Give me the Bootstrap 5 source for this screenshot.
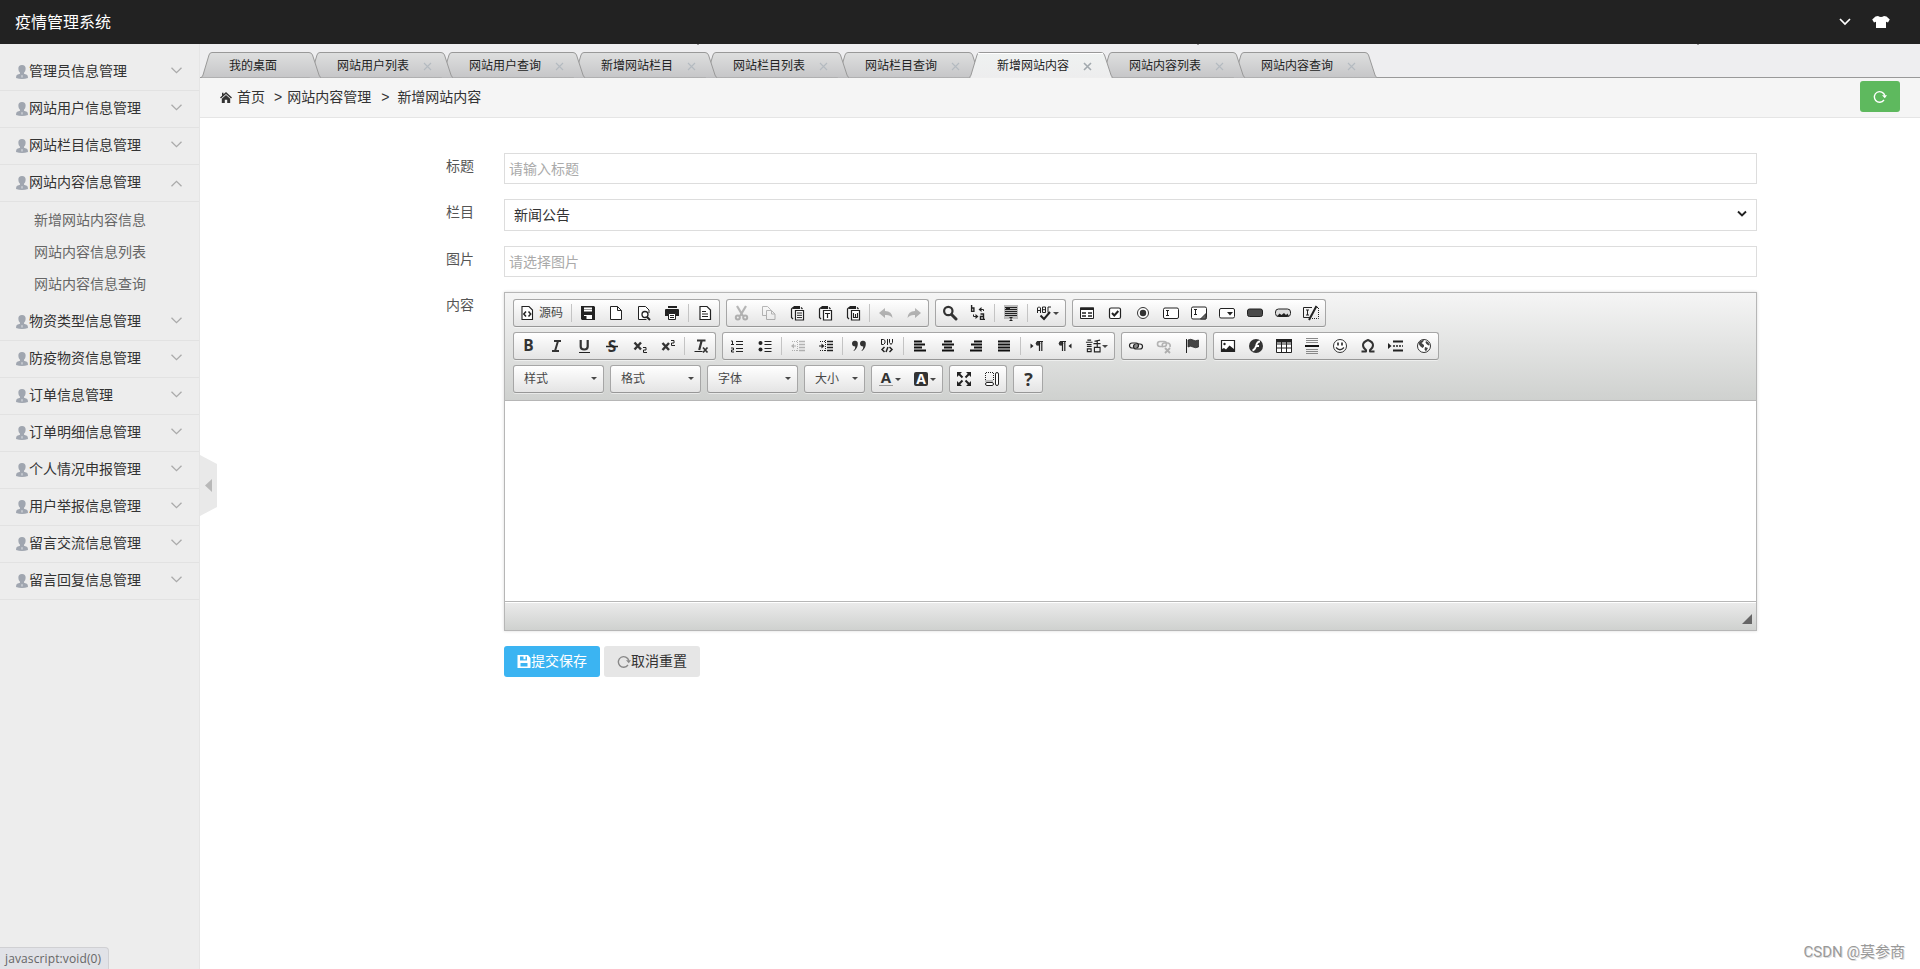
<!DOCTYPE html>
<html lang="zh-CN">
<head>
<meta charset="utf-8">
<title>疫情管理系统</title>
<link rel="stylesheet" href="https://cdn.jsdelivr.net/npm/bootstrap@5.3.0/dist/css/bootstrap.min.css">
<style>
body{font-family:"Liberation Sans","Noto Sans CJK SC",sans-serif;font-size:14px;line-height:20px;color:#333;background:#fff}
.topbar{height:44px;background:#222;color:#fff;font-size:16px;padding:0 30px 0 15px;gap:21px}
.topbar .me-auto{padding-top:1px}
.side{width:200px;background:#ededed;border-right:1px solid #e5e5e5;padding-top:10px}
.side-head{height:37px;border-bottom:1px solid #e2e2e2;padding:0 17px 0 16px}
.side-head>span{padding-bottom:2px}
.side-head .chev{margin-top:-3px}
.side-head.open .chev{transform:rotate(180deg);margin-top:0}
.side-sub{padding:2px 0 4px}
.side-sub a{display:block;height:32px;line-height:32px;padding-left:34px;color:#666;text-decoration:none}
.tabstrip{height:34px;background:#eeeef0 radial-gradient(circle at 1px 0,#999 1px,transparent 1.5px) -3px 0/500px 40px;border-bottom:1px solid #999;padding:8px 0 0 1px}
.tab-item{width:144px;height:26px;margin-right:-12px;padding-left:28px;font-size:12px;line-height:26px;color:#222}
.tab-item.home{width:120px}
.tab-item>svg.shape{left:0;top:0}
.tab-item>span{position:relative;padding-top:1px}
.tab-item .cls{position:relative;margin-left:14px;top:1px}
.crumbs{height:40px;background:#f5f5f5;border-bottom:1px solid #e5e5e5;padding:0 20px}
.crumbs>span{padding-bottom:1px}
.btn-green{width:40px;height:31px;background:#5eb95e;border-radius:3px;margin-top:-3px}
.form-area{padding:35px 163px 0 0}
.f-row{margin-bottom:15px}
.f-label{width:304px;padding-right:30px;color:#555;text-align:right;line-height:20px;padding-top:3px}
.form-control.f-in,.form-select.f-in{height:31px;border:1px solid #ddd;border-radius:0;font-size:14px;padding:0 4px;line-height:29px;color:#333}
.form-control.f-in::placeholder{color:#aaa}
.form-select.f-in{height:32px;padding-left:9px;background-size:0}
.sel-arrow{right:10px;top:11px}
.editor{border:1px solid #b6b6b6;box-shadow:0 0 3px rgba(0,0,0,.15)}
.ed-top{height:108px;padding:6px 8px 0;border-bottom:1px solid #b6b6b6;background:linear-gradient(#f5f5f5,#cfd1cf)}
.ed-row{gap:6px;margin-bottom:5px}
.ed-group{height:28px;border:1px solid #a6a6a6;border-bottom-color:#979797;border-radius:3px;background:linear-gradient(#fff,#e4e4e4);box-shadow:0 1px 0 rgba(255,255,255,.5)}
.ed-btn{width:28px;height:26px}
.ed-btn.dd{width:35px;padding-left:6px}
.ed-btn.src{width:55px;padding-left:5px;gap:4px;font-size:12px;color:#484848}
.ed-btn.off{opacity:.3}
.ed-sep{width:1px;height:18px;margin:4px 2px;background:#c4c4c4}
.caret{border:3px solid transparent;border-top-color:#474747;border-bottom:0;width:0;height:0}
.ed-combo{width:91px;padding:0 6px 1px 10px;font-size:12px;color:#474747}
.ed-combo.sm{width:61px}
.ed-area{height:200px}
.ed-foot{height:29px;border-top:1px solid #b6b6b6;background:linear-gradient(#ebebeb,#cfd1cf);box-shadow:inset 0 1px 0 #fff;padding:0 4px 6px}
.grip{border:5px solid transparent;border-right-color:#666;border-bottom-color:#666}
.act{height:31px;width:96px;border-radius:3px;font-size:14px;padding:0}
.act.save{background:#3bb4f2;color:#fff}
.act.reset{background:#e6e6e6;color:#333}
.handle{left:200px;top:455px}
.status{left:0;bottom:0;width:109px;height:22px;border:1px solid #d0d0d3;border-left:0;border-bottom:0;border-radius:0 4px 0 0;background:#e1e2e7;color:#666;font:12px/22px "Open Sans",sans-serif;letter-spacing:.12px;padding-left:5px;white-space:nowrap}
.wm{right:15px;bottom:6px;font:15px/22px Roboto,"Noto Sans CJK SC",sans-serif;color:#999;text-shadow:-1px -1px 0 #fff,1px 1px 0 #ddd}
svg{flex:none;display:block}
</style>
</head>
<body class="vh-100 overflow-hidden d-flex flex-column">

<svg width="0" height="0" class="position-absolute"><defs>
<symbol id="user" viewBox="0 0 12 14"><path fill="#a0a6b0" d="M6 0C3.200 0 2.200 1.500 2.400 4c.1 1.600.7 3 1.600 3.800V8.800L1.200 9.800Q0 10.400 0 13q6 2 12 0 0-2.600-1.200-3.200L8 8.800V7.800C8.900 7 9.500 5.600 9.600 4 9.800 1.500 8.800 0 6 0"/><path fill="#d5d8dc" d="M6 10l.8.8-.5 2h-.6l-.5-2z"/></symbol>
<symbol id="chev" viewBox="0 0 11 7"><path d="M.5.7l5 5 5-5" fill="none" stroke="currentColor" stroke-width="1.300"/></symbol>
<symbol id="shirt" viewBox="0 0 18 14"><path fill="#fff" d="M6 1q3 2 6 0l2.500.6L17.800 4.500 16 7.500l-2-.8V13H4V6.700l-2 .8L.2 4.500 3.500 1.600z"/></symbol>
<symbol id="home" viewBox="0 0 12 11"><path fill="#333" d="M6 0l6 5.600-1 .9L6 2 1 6.500l-1-.9L2 3.700 2 .8h1.500v1.500z"/><path fill="#333" d="M6 3l4.200 3.800V11H7.200V7.700H4.800V11h-3V6.800z"/></symbol>
<symbol id="spin" viewBox="0 0 14 13"><path d="M11 10A5.300 5.300 0 1 1 11.800 5.500" fill="none" stroke="currentColor" stroke-width="1.400"/><path fill="currentColor" d="M9 5.200h5L11.800 8.200z"/></symbol>
<symbol id="disk" viewBox="0 0 14 13"><path fill="#fff" fill-rule="evenodd" d="M.5 0H11l2.500 3v10H.5zM3 1.500v4h7v-4H8.500v2.700H6.500V1.500zM3.500 8v3.500h7V8z"/></symbol>
<symbol id="source" viewBox="0 0 16 16"><path d="M3 1.500h7l3.500 3.500v9.500H3z" fill="#fff" stroke="#222" stroke-width="1.100"/><path d="M7 6.500L4.800 9 7 11.500M9.500 6.500L11.700 9l-2.200 2.500" fill="none" stroke="#222" stroke-width="1.500"/></symbol>
<symbol id="save" viewBox="0 0 16 16"><path fill="#222" d="M1 1h13l1 1v13H2l-1-1z"/><path fill="#fff" d="M4 2.500h8v4H4zM4 10h8v4H6.500v-3H4z"/><path d="M4 4.500h8" stroke="#999"/></symbol>
<symbol id="newp" viewBox="0 0 16 16"><path d="M2.500 1.500h7l4 4v9h-11zM9.500 1.500v4h4" fill="#fff" stroke="#222"/></symbol>
<symbol id="preview" viewBox="0 0 16 16"><path d="M2.500 1.500h7l3.500 3.500v3M2.500 1.500v13h8" fill="#fff" stroke="#222"/><circle cx="9" cy="9.500" r="3" fill="#fff" stroke="#222" stroke-width="1.300"/><path d="M11 12l3 3" stroke="#222" stroke-width="2"/></symbol>
<symbol id="print" viewBox="0 0 16 16"><path fill="#222" d="M4 1h9v2H4zM1 5q0-1 1-1h12q1 0 1 1v6H1z"/><path d="M4.500 8.500h7v6h-7z" fill="#fff" stroke="#222"/><path d="M6 10.500h4M6 12.500h4" stroke="#222"/></symbol>
<symbol id="templ" viewBox="0 0 16 16"><path d="M3 1.500h7l3.500 3.500v9.500H3z" fill="#fff" stroke="#222" stroke-width="1.200"/><path d="M5 6.500h4M5 9h6M5 11.500h6" stroke="#222" stroke-width="1.200"/></symbol>
<symbol id="cut" viewBox="0 0 16 16"><path d="M4 1l6 10M13 1L7 11" stroke="#222" stroke-width="2.200"/><circle cx="4.800" cy="12.500" r="2" fill="none" stroke="#222" stroke-width="2"/><circle cx="12.200" cy="12.500" r="2" fill="none" stroke="#222" stroke-width="2"/></symbol>
<symbol id="copy" viewBox="0 0 16 16"><path d="M5.500 10.500h-4v-9h5l3 3v1M5.500 5.500h5l3.500 3.500v5.500H5.500zM10.500 5.500V9H14" fill="none" stroke="#222"/></symbol>
<symbol id="clip" viewBox="0 0 16 16"><path d="M4 2.500L2.500 4v8.500L4 14M12 2.500l1.500 1.500" fill="none" stroke="#222" stroke-width="1.200"/><path fill="#222" d="M5 1h6v3H4V2z"/><path d="M6.500 5.500h8v9.500h-8z" fill="#fff" stroke="#222" stroke-width="1.200"/></symbol>
<symbol id="paste" viewBox="0 0 16 16"><use href="#clip"/><path d="M8 8h5M8 10.300h5M8 12.600h5" stroke="#222"/></symbol>
<symbol id="pastet" viewBox="0 0 16 16"><use href="#clip"/><path d="M8 8.500h5M10.500 8.500V13" stroke="#222" stroke-width="1.200"/></symbol>
<symbol id="pastew" viewBox="0 0 16 16"><use href="#clip"/><path d="M8.500 8v4.500h4V8M10.500 9v3.500" fill="none" stroke="#222" stroke-width="1.100"/></symbol>
<symbol id="undo" viewBox="0 0 16 16"><path fill="#222" d="M7 3v3q7 0 7.500 7-2.500-3.500-7.500-3v3L1 8z"/></symbol>
<symbol id="redo" viewBox="0 0 16 16"><path fill="#222" d="M9 3v3q-7 0-7.500 7Q4 9.500 9 10v3l6-5z"/></symbol>
<symbol id="find" viewBox="0 0 16 16"><circle cx="6.300" cy="6" r="4.200" fill="none" stroke="#333" stroke-width="2.200"/><path d="M9.800 9.700L14 14" stroke="#333" stroke-width="3" stroke-linecap="round"/></symbol>
<symbol id="replace" viewBox="0 0 16 16"><path d="M1.600 0v7M1.600 3h2.300v3.400H1.600M10.500 9h3v5.500M13.500 11.500h-3v2.900h4.500" fill="none" stroke="#222" stroke-width="1.400"/><path d="M13.500 6V4.500H11M3.500 9.500v2H6" fill="none" stroke="#222"/><path fill="#222" d="M11.500 2v5l-3-2.500zM5.500 9v5l3-2.500z"/></symbol>
<symbol id="selall" viewBox="0 0 16 16"><path fill="#bbb" d="M1 0h14v14H1z"/><path d="M2 2.500h12M2 4.500h12M2 6.500h12M2 8.500h12M2 10.500h12" stroke="#222"/><path fill="#222" d="M3 2h4v3H3z"/><path d="M8 12v4M6.500 12.500h3M6.500 15.500h3" stroke="#222"/></symbol>
<symbol id="spell" viewBox="0 0 16 16"><path d="M1.500 8V3l1-1h1l1 1v5M1.500 5.500h3M6.500 2v5.500h3V2h-3M6.500 4.700h3M15 2h-3v5.500h2" fill="none" stroke="#222"/><path d="M4.500 10.500l3.500 3.500L14 7" fill="none" stroke="#222" stroke-width="2"/></symbol>
<symbol id="form" viewBox="0 0 16 16"><path d="M1.500 3h13v10.500h-13z" fill="#fff" stroke="#222"/><path fill="#222" d="M1 2.500h14V5H1z"/><path d="M3 8h4M3 11h4M9 8h4M9 11h4" stroke="#222" stroke-width="1.600"/></symbol>
<symbol id="check" viewBox="0 0 16 16"><rect x="2.500" y="3" width="11" height="10.500" rx="1.500" fill="#fff" stroke="#222" stroke-width="1.200"/><path d="M5 8l2.300 2.500 4-4.500" fill="none" stroke="#222" stroke-width="2"/></symbol>
<symbol id="radio" viewBox="0 0 16 16"><circle cx="8" cy="8" r="5.500" fill="#fff" stroke="#333"/><circle cx="8" cy="8" r="3.200" fill="#333"/></symbol>
<symbol id="tfield" viewBox="0 0 16 16"><rect x=".5" y="3" width="15" height="10.500" rx="1.500" fill="#fff" stroke="#222"/><path d="M3 5.500h3M3 10.500h3M4.500 5.500v5" stroke="#222"/></symbol>
<symbol id="tarea" viewBox="0 0 16 16"><rect x=".5" y="2" width="15" height="12" rx="1.500" fill="#fff" stroke="#222"/><path d="M3 4.500h3M3 9.500h3M4.500 4.500v5" stroke="#222"/><path d="M9.500 14L15 8.500V14z" fill="#666" stroke="#333"/></symbol>
<symbol id="select" viewBox="0 0 16 16"><rect x=".5" y="3.500" width="15" height="9.500" rx="1.500" fill="#fff" stroke="#222"/><path fill="#222" d="M8 7h6l-3 3.500z"/></symbol>
<symbol id="button" viewBox="0 0 16 16"><rect x=".5" y="4" width="15" height="7.500" rx="2" fill="#4a4a4a" stroke="#222"/></symbol>
<symbol id="imgbtn" viewBox="0 0 16 16"><rect x=".5" y="4" width="15" height="7.500" rx="3" fill="#ddd" stroke="#222"/><path fill="#222" d="M2 11.500l2.500-3 2 1.500L9 8l2 2 1.500-1.500 1.500 3z"/></symbol>
<symbol id="hidden" viewBox="0 0 16 16"><path d="M9 2.500H.5v10H7M3 5h3M3 10h3M4.500 5v5" fill="none" stroke="#222"/><path d="M12 2.500h3.500v11H9" fill="none" stroke="#222" stroke-dasharray="1 1"/><path d="M13.500 1L6 15" stroke="#222" stroke-width="2"/></symbol>
<symbol id="bold" viewBox="0 0 16 16"><text x="3.200" y="13.300" font-family="Open Sans" font-weight="700" font-size="15.500" fill="#333">B</text></symbol>
<symbol id="italic" viewBox="0 0 16 16"><path d="M6 3h7M4 13h7M10 3L7 13" stroke="#333" stroke-width="2" fill="none"/></symbol>
<symbol id="under" viewBox="0 0 16 16"><path d="M4.700 2v6.500q0 3 3.500 3t3.500-3V2" fill="none" stroke="#333" stroke-width="2.200"/><path d="M3 14.500h11" stroke="#222"/></symbol>
<symbol id="strike" viewBox="0 0 16 16"><text x="3.700" y="13.500" font-family="Open Sans" font-weight="700" font-size="15.500" fill="#333">S</text><path d="M2 8.500h12" stroke="#222" stroke-width="1.500"/></symbol>
<symbol id="sub" viewBox="0 0 16 16"><path d="M2.500 4.500l6.500 7M9 4.500l-6.500 7" stroke="#333" stroke-width="2.400"/><path d="M11 9.500h3v2.500h-2.500v2.500H15" fill="none" stroke="#222"/></symbol>
<symbol id="sup" viewBox="0 0 16 16"><path d="M2.500 5l6.500 7M9 5l-6.500 7" stroke="#333" stroke-width="2.400"/><path d="M11 2.500h3V5h-2.500v2.500H15" fill="none" stroke="#222"/></symbol>
<symbol id="rmfmt" viewBox="0 0 16 16"><path d="M4 2.500h8.500M8.700 2.500L6.200 12" stroke="#333" stroke-width="2.200"/><path d="M1.500 13.500h8" stroke="#222"/><path d="M10 9.500l4.500 5M14.500 9.500l-4.500 5" stroke="#333" stroke-width="1.700"/></symbol>
<symbol id="ol" viewBox="0 0 16 16"><path d="M2 3h1.500v3.500M2 6.500h3M2 10h2.500v2H2.500v2H5" fill="none" stroke="#222"/><path d="M7 3.500h7M7 6.500h7M7 10.500h7M7 13.500h7" stroke="#222" stroke-width="1.200"/></symbol>
<symbol id="ul" viewBox="0 0 16 16"><circle cx="3.500" cy="5" r="2" fill="#222"/><circle cx="3.500" cy="11.500" r="2" fill="#222"/><path d="M7.500 3.500h7M7.500 6.500h7M7.500 10.500h7M7.500 13.500h7" stroke="#222" stroke-width="1.200"/></symbol>
<symbol id="indent" viewBox="0 0 16 16"><path d="M7.500 2v12" stroke="#222" stroke-dasharray="1 1"/><path d="M9 3.500h6M9 6.500h6M9 9.500h6M9 12.500h6" stroke="#222" stroke-width="1.300"/><path d="M1 8h3" stroke="#222"/><path fill="#222" d="M3.500 5.500v5l3-2.500z"/><path d="M2 3.500h5M2 12.500h5" stroke="#222" stroke-dasharray="1 1"/></symbol>
<symbol id="outdent" viewBox="0 0 16 16"><path d="M7.500 2v12" stroke="#222" stroke-dasharray="1 1"/><path d="M9 3.500h6M9 6.500h6M9 9.500h6M9 12.500h6" stroke="#222" stroke-width="1.300"/><path d="M3 8h3" stroke="#222"/><path fill="#222" d="M4 5.500v5L1 8z"/><path d="M2 3.500h5M2 12.500h5" stroke="#222" stroke-dasharray="1 1"/></symbol>
<symbol id="quote" viewBox="0 0 16 16"><path fill="#333" d="M1 5.500A2.700 2.700 0 0 1 6.800 6Q6.800 10 3 13L2.500 12.500Q4.500 10.500 4.300 8.500 1 8.500 1 5.500M9 5.500a2.700 2.700 0 0 1 5.800.5q0 4-3.800 7l-.5-.5q2-2 1.800-4Q9 8.500 9 5.500"/></symbol>
<symbol id="div" viewBox="0 0 16 16"><path d="M2.500 1v5.500h2L6 5V2.500L4.500 1.500h-2M8.500 1v6M10.500 1v3.500L12 6.500l1.500-2V1" fill="none" stroke="#222"/><path d="M5.500 9L3 11.500 5.500 14M10.500 9L13 11.500 10.500 14M9 9l-2 5" fill="none" stroke="#222" stroke-width="1.500"/></symbol>
<symbol id="al" viewBox="0 0 16 16"><path d="M2 3.500h8M2 6.500h11M2 9.500h8M2 12.500h12" stroke="#111" stroke-width="1.800"/></symbol>
<symbol id="ac" viewBox="0 0 16 16"><path d="M4 3.500h8M2 6.500h12M4 9.500h8M2 12.500h12" stroke="#111" stroke-width="1.800"/></symbol>
<symbol id="ar" viewBox="0 0 16 16"><path d="M6 3.500h8M3 6.500h11M6 9.500h8M2 12.500h12" stroke="#111" stroke-width="1.800"/></symbol>
<symbol id="aj" viewBox="0 0 16 16"><path d="M2 3.500h12M2 6.500h12M2 9.500h12M2 12.500h12" stroke="#111" stroke-width="1.800"/></symbol>
<symbol id="pil" viewBox="0 0 16 16"><path d="M8 3.500h6" stroke="#222"/><circle cx="9" cy="5.500" r="2.300" fill="#333"/><path d="M10.500 3v10M12.800 3v10" stroke="#222" stroke-width="1.200"/></symbol>
<symbol id="ltr" viewBox="0 0 16 16"><use href="#pil"/><path fill="#222" d="M1.500 5.500v5l3-2.500z"/></symbol>
<symbol id="rtl" viewBox="0 0 16 16"><use href="#pil" x="-5"/><path fill="#222" d="M14.500 5.500v5l-3-2.500z"/></symbol>
<symbol id="lang" viewBox="0 0 17 16"><path d="M1 4h7M2.500 1.800h4M2 6.500h5M2 8.500h5M2.500 11h4v3h-4zM9 5.500h7.500M16 1.800L10 3M13 2.500V9M10 9.500h6v4.700h-6z" fill="none" stroke="#222" stroke-width="1.200"/></symbol>
<symbol id="link" viewBox="0 0 16 16"><rect x="1.500" y="5" width="9" height="5" rx="2.500" fill="none" stroke="#222" stroke-width="1.200"/><rect x="5.500" y="6" width="9" height="5" rx="2.500" fill="none" stroke="#222" stroke-width="1.200"/><path d="M5 8h6" stroke="#222"/></symbol>
<symbol id="unlink" viewBox="0 0 16 16"><rect x="1.500" y="3.500" width="9" height="5" rx="2.500" fill="none" stroke="#222" stroke-width="1.600"/><path d="M7 9q-2-3 1-4h4q3 1 2 4" fill="none" stroke="#222" stroke-width="1.600"/><path d="M9 10l5 5M14 10l-5 5" stroke="#222" stroke-width="1.800"/></symbol>
<symbol id="anchor" viewBox="0 0 16 16"><path d="M2.500 1v14" stroke="#222"/><path fill="#444" stroke="#222" stroke-width=".7" d="M4 2q3-1.500 5 0t5.500 0v7q-3 1.500-5.500 0T4 9z"/></symbol>
<symbol id="image" viewBox="0 0 16 16"><path d="M1.500 2.500h13v11h-13z" fill="#fff" stroke="#222" stroke-width="1.200"/><circle cx="4.500" cy="6" r="1.200" fill="#222"/><path fill="#222" d="M2 13v-2l2-1 2 1.500 3.500-4 4.500 3.500V13z"/></symbol>
<symbol id="flash" viewBox="0 0 16 16"><circle cx="8" cy="8" r="7" fill="#333"/><path d="M12 3.500Q9 3.500 8 8q-1 4-3.500 4.500M7.500 8H11" fill="none" stroke="#fff" stroke-width="1.800"/></symbol>
<symbol id="table" viewBox="0 0 16 16"><path d="M.5 1.500h15v13H.5zM.5 6h15M.5 10h15M5.500 4v10M10.500 4v10" fill="#fff" stroke="#222"/><path fill="#222" d="M0 1h16v3.500H0z"/></symbol>
<symbol id="hr" viewBox="0 0 16 16"><path d="M2 .5h12M2 2.500h12M2 4.500h12M2 11.500h12M2 13.500h12M2 15.500h12" stroke="#888"/><path d="M1 8h14" stroke="#111" stroke-width="2"/></symbol>
<symbol id="smile" viewBox="0 0 16 16"><circle cx="8" cy="8" r="6.500" fill="#fff" stroke="#333"/><path d="M6 4.500v3M10 4.500v3" stroke="#222" stroke-width="1.600"/><path d="M4 9.500q4 4.500 8 0" fill="none" stroke="#333" stroke-width="1.300"/></symbol>
<symbol id="omega" viewBox="0 0 16 16"><path d="M1.500 13.500H6V12Q3 10 3 7t5-5q5 2 5 5t-3 5v1.500h4.500" fill="none" stroke="#333" stroke-width="2" stroke-linejoin="round"/></symbol>
<symbol id="pbreak" viewBox="0 0 16 16"><path fill="#222" d="M0 5v6l3.500-3z"/><path d="M5 3.500h10M5 12.500h10" stroke="#222" stroke-width="2"/><path d="M5 8h10" stroke="#222" stroke-width="1.300" stroke-dasharray="2 1"/></symbol>
<symbol id="globe" viewBox="0 0 16 16"><circle cx="8" cy="8" r="6.500" fill="#fff" stroke="#333"/><path fill="#444" d="M2.500 5.500Q4 2 8 2L7 4 5.500 5 8 7v1.500L6.500 10 4 8zM10 3q3 1 3.700 4l-1.200.5L10.500 6 9.500 4.500zM9 9l3 1-2 3.500-1.500-2z"/></symbol>
<symbol id="tcolor" viewBox="0 0 16 16"><text x="2.800" y="12" font-family="Open Sans" font-weight="700" font-size="15" fill="#333">A</text><path d="M1 14.500h14" stroke="#999"/></symbol>
<symbol id="bcolor" viewBox="0 0 16 16"><rect x="1" y="1" width="14" height="14" rx="2" fill="#333"/><text x="3.200" y="12.900" font-family="Open Sans" font-weight="700" font-size="14" fill="#fff">A</text></symbol>
<symbol id="max" viewBox="0 0 16 16"><path d="M3 3l3.500 3.500M13 3L9.500 6.500M3 13l3.500-3.500M13 13L9.500 9.500" stroke="#222" stroke-width="2"/><path fill="#222" d="M1 1h5L1 6zM15 1v5l-5-5zM1 15v-5l5 5zM15 15h-5l5-5z"/></symbol>
<symbol id="blocks" viewBox="0 0 16 16"><path d="M9.500 9V1.500h-8V10h8" fill="none" stroke="#222" stroke-dasharray="1 1"/><rect x="1.500" y="11.500" width="8" height="3" rx="1.500" fill="#fff" stroke="#222"/><rect x="11.500" y="1.500" width="3" height="13" rx="1.500" fill="#fff" stroke="#222"/></symbol>
<symbol id="about" viewBox="0 0 16 16"><text x="4.200" y="14.500" font-family="Open Sans" font-weight="700" font-size="18" fill="#333">?</text></symbol>
<linearGradient id="tabg" x1="0" y1="0" x2="0" y2="1"><stop offset="0" stop-color="#dedfdf"/><stop offset="1" stop-color="#c6c6c8"/></linearGradient>
<linearGradient id="taba" x1="0" y1="0" x2="0" y2="1"><stop offset="0" stop-color="#eff2f1"/><stop offset="1" stop-color="#ededee"/></linearGradient>
</defs></svg>

<header class="topbar d-flex align-items-center">
  <span class="me-auto">疫情管理系统</span>
  <svg width="12" height="8"><path d="M1 1l5 5 5-5" fill="none" stroke="#fff" stroke-width="1.700"/></svg>
  <svg width="18" height="14"><use href="#shirt"/></svg>
</header>

<div class="d-flex flex-grow-1">
  <aside class="side flex-shrink-0" id="side"></aside>
  <main class="flex-grow-1">
    <nav class="tabstrip d-flex" id="tabs"></nav>
    <div class="crumbs d-flex align-items-center">
      <svg width="12" height="11" class="me-1"><use href="#home"/></svg>
      <span style="margin-left:1px">首页</span><span style="margin:0 5px 0 9px">&gt;</span><span>网站内容管理</span><span style="margin:0 8px 0 10px">&gt;</span><span>新增网站内容</span>
      <button class="btn btn-green ms-auto p-0 border-0 d-flex align-items-center justify-content-center text-white"><svg width="14" height="13"><use href="#spin"/></svg></button>
    </div>
    <form class="form-area">
      <div class="f-row d-flex"><label class="f-label flex-shrink-0">标题</label><input class="form-control f-in" placeholder="请输入标题"></div>
      <div class="f-row d-flex"><label class="f-label flex-shrink-0">栏目</label>
        <div class="position-relative flex-grow-1"><select class="form-select f-in"><option>新闻公告</option></select>
        <svg class="sel-arrow position-absolute" width="10" height="8"><path d="M1 1.500l4 4 4-4" fill="none" stroke="#222" stroke-width="1.900"/></svg></div></div>
      <div class="f-row d-flex"><label class="f-label flex-shrink-0">图片</label><input class="form-control f-in" placeholder="请选择图片"></div>
      <div class="f-row d-flex"><label class="f-label flex-shrink-0">内容</label>
        <div class="editor flex-grow-1">
          <div class="ed-top" id="tools"></div>
          <div class="ed-area bg-white"></div>
          <div class="ed-foot d-flex justify-content-end align-items-end"><span class="grip"></span></div>
        </div></div>
      <div class="d-flex"><span class="f-label flex-shrink-0"></span>
        <button type="button" class="btn act save border-0 d-flex align-items-center justify-content-center me-1"><svg width="14" height="13"><use href="#disk"/></svg>提交保存</button>
        <button type="button" class="btn act reset border-0 d-flex align-items-center justify-content-center"><svg width="14" height="13" color="#888"><use href="#spin"/></svg>取消重置</button>
      </div>
    </form>
  </main>
</div>

<svg class="handle position-absolute" width="17" height="61"><path fill="#e9e9e9" d="M0 0l17 9v43L0 61z"/><path fill="#b8b8b8" d="M12 24v13L5 30.500z"/></svg>
<div class="status position-absolute">javascript:void(0)</div>
<div class="wm position-absolute">CSDN @莫参商</div>

<script src="https://cdn.jsdelivr.net/npm/bootstrap@5.3.0/dist/js/bootstrap.bundle.min.js"></script>
<script>
const ico = (n, w = 16, h = 16) => `<svg width="${w}" height="${h}"><use href="#${n}"/></svg>`;

// Sidebar menu
const menu = ['管理员信息管理','网站用户信息管理','网站栏目信息管理','网站内容信息管理','物资类型信息管理','防疫物资信息管理','订单信息管理','订单明细信息管理','个人情况申报管理','用户举报信息管理','留言交流信息管理','留言回复信息管理'];
const subs = ['新增网站内容信息','网站内容信息列表','网站内容信息查询'];
document.getElementById('side').innerHTML = menu.map((t, i) =>
  `<div class="side-head d-flex align-items-center ${i === 3 ? 'open' : ''}">${ico('user', 12, 14)}<span class="me-auto" style="margin-left:1px">${t}</span><svg class="chev" width="11" height="7" color="#aaa"><use href="#chev"/></svg></div>` +
  (i === 3 ? `<div class="side-sub">${subs.map(s => `<a href="#">${s}</a>`).join('')}</div>` : '')).join('');

// Page tabs: earlier tabs overlap later ones, the active one is on top
const tabs = ['我的桌面','网站用户列表','网站用户查询','新增网站栏目','网站栏目列表','网站栏目查询','新增网站内容','网站内容列表','网站内容查询'];
document.getElementById('tabs').innerHTML = tabs.map((t, i) => {
  const w = i ? 144 : 120, on = i === 6;
  const d = `M0 25.500Q1.500 25 2 23L8 3Q8.700 .5 11 .5H${w - 12}Q${w - 9.500} .5 ${w - 8.500} 3L${w - 2} 23Q${w - 1.500} 25 ${w} 25.500`;
  return `<div class="tab-item flex-shrink-0 position-relative d-flex align-items-center ${i ? '' : 'home'}" style="z-index:${on ? 20 : 10 - i}">
    <svg class="shape position-absolute" width="${w}" height="26"><path d="${d}" fill="url(#${on ? 'taba' : 'tabg'})" stroke="#999"/>${on ? `<path d="M2 25.500H${w - 2}" stroke="#eee"/><path d="M9 1.500H${w - 10}" stroke="#fff"/>` : ''}</svg>
    <span>${t}</span>${i ? `<svg class="cls" width="9" height="9"><path d="M1 1l7 7M8 1L1 8" stroke="${on ? '#a2a9ae' : '#b4bac0'}" stroke-width="${on ? 1.6 : 1.1}"/></svg>` : ''}</div>`;
}).join('');

// Editor toolbar: '|' separator, '-' prefix disabled, '+' prefix drop-down, '=' prefix combo
const rows = [
  ['source | save newp preview print | templ', '-cut -copy paste pastet pastew | -undo -redo', 'find replace | selall | +spell', 'form check radio tfield tarea select button imgbtn hidden'],
  ['bold italic under strike sub sup | rmfmt', 'ol ul | -outdent indent | quote div | al ac ar aj | ltr rtl +lang', 'link -unlink anchor', 'image flash table hr smile omega pbreak globe'],
  ['=样式', '=格式', '=字体', '=大小', '+tcolor +bcolor', 'max blocks', 'about']
];
const caret = '<i class="caret"></i>';
const item = k => {
  if (k === '|') return '<span class="ed-sep"></span>';
  if (k === 'source') return `<span class="ed-btn src d-flex align-items-center">${ico(k)}<span>源码</span></span>`;
  if (k[0] === '+') return `<span class="ed-btn dd d-flex align-items-center">${ico(k.slice(1))}<span style="width:1px"></span>${caret}</span>`;
  const off = k[0] === '-';
  return `<span class="ed-btn d-flex align-items-center justify-content-center ${off ? 'off' : ''}">${ico(off ? k.slice(1) : k)}</span>`;
};
document.getElementById('tools').innerHTML = rows.map(r => '<div class="ed-row d-flex">' + r.map(g =>
  g[0] === '='
    ? `<div class="ed-group ed-combo d-flex align-items-center justify-content-between ${g === '=大小' ? 'sm' : ''}"><span>${g.slice(1)}</span>${caret}</div>`
    : `<div class="ed-group d-flex">${g.split(' ').map(item).join('')}</div>`).join('') + '</div>').join('');
</script>
</body>
</html>
